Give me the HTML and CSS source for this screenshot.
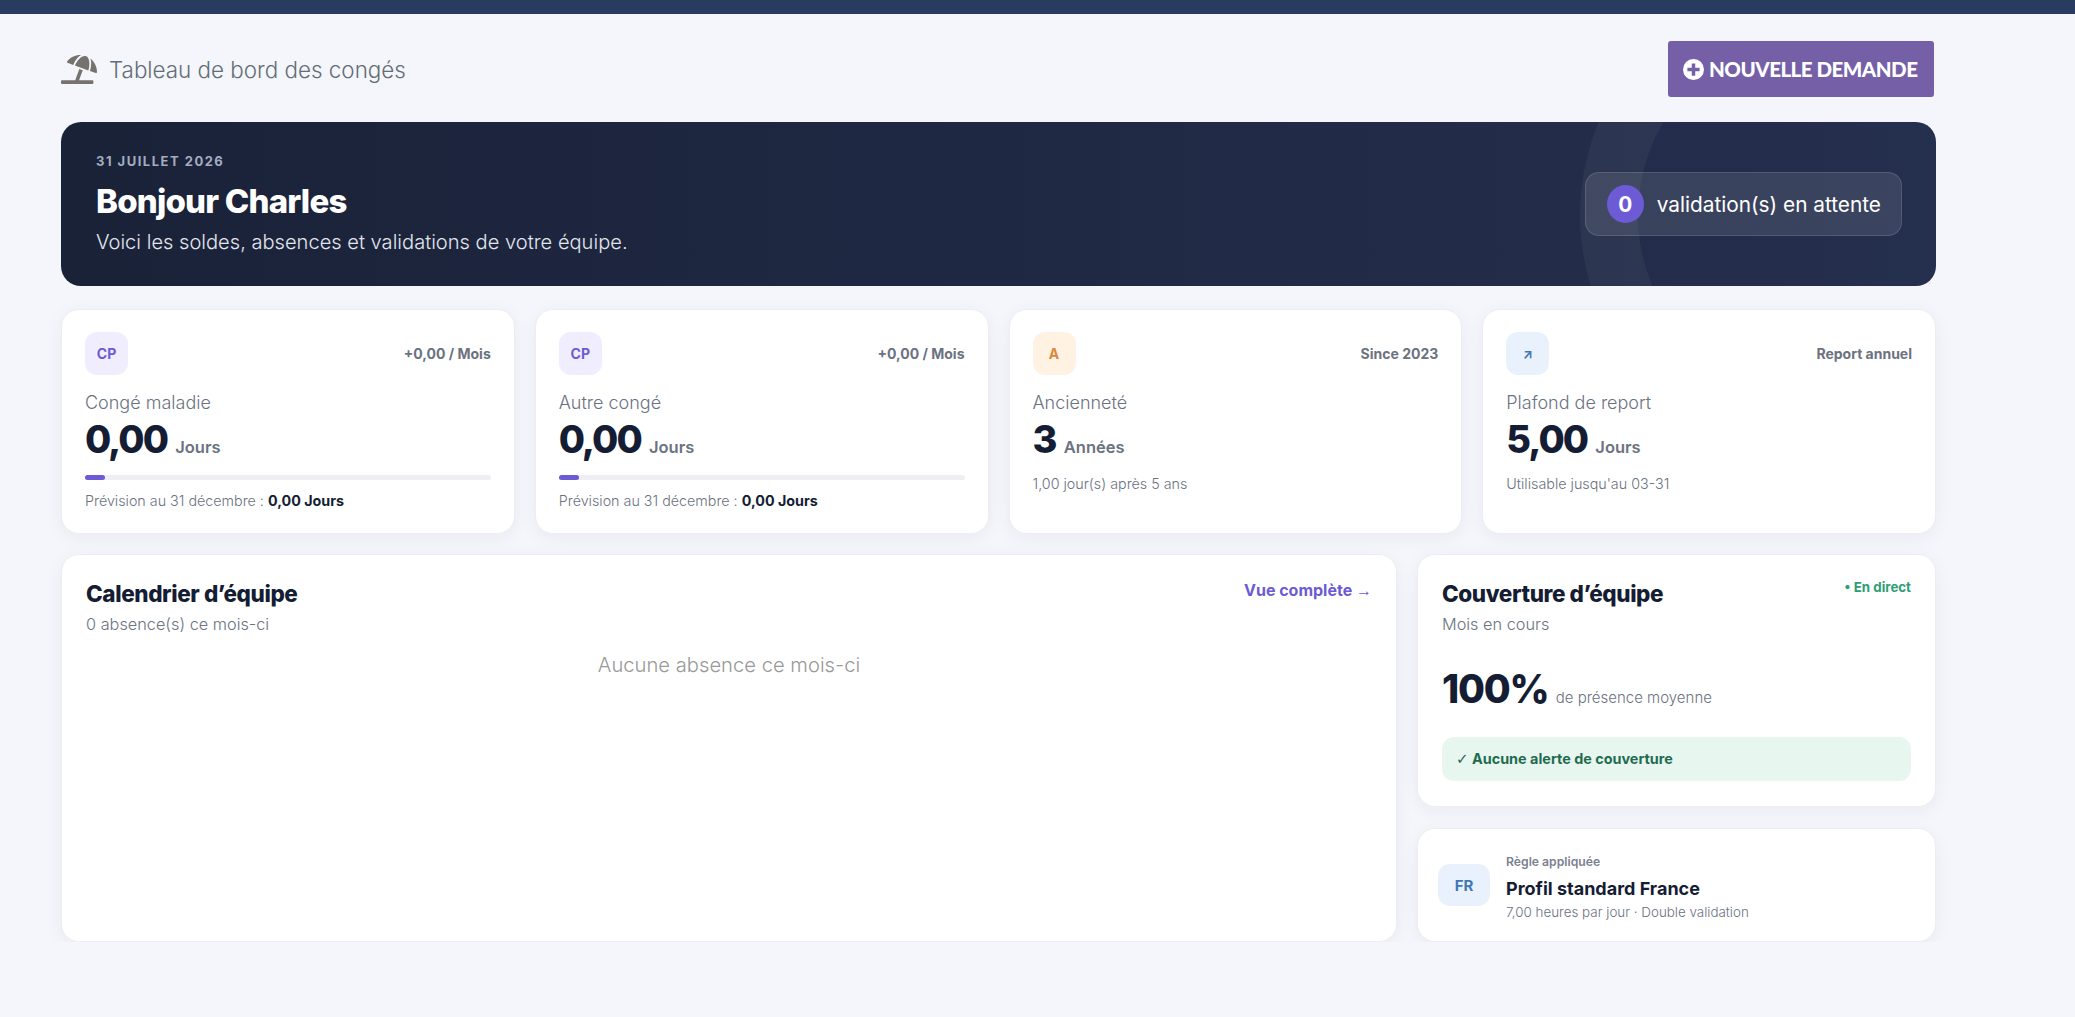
FILE: index.html
```html
<!DOCTYPE html>
<html lang="fr">
<head>
    <meta charset="UTF-8">
    <title>Tableau de bord des congés</title>
    <link rel="stylesheet" href="styles.css">
</head>
<body>
    <div class="topbar"></div>
    <main class="page">
        <div class="page-head">
            <div class="page-title">
                <svg class="beach-icon" viewBox="0 0 640 512"><path d="M115.38 136.9l102.11 37.18c35.19-81.54 86.21-144.29 139-173.7-95.88-4.89-188.78 36.96-248.53 111.8-6.69 8.4-2.66 21.05 7.42 24.72zm132.25 48.16l238.48 86.83c35.76-121.38 18.7-231.66-42.63-253.98-7.4-2.7-15.13-4-23.09-4-58.02.01-128.27 69.17-172.76 171.15zM521.48 60.5c6.22 16.3 10.83 34.6 13.2 55.19 5.74 49.89-1.42 108.23-18.95 166.98l102.62 37.36c10.09 3.67 21.31-3.43 21.57-14.17 2.32-95.69-41.91-187.44-118.44-245.36zM560 447.98H321.06L386 269.5l-60.14-21.9-72.9 200.37H16c-8.84 0-16 7.16-16 16.01v32.01C0 504.83 7.16 512 16 512h544c8.84 0 16-7.17 16-16.01v-32.01c0-8.84-7.16-16-16-16z"/></svg>
                <span>Tableau de bord des congés</span>
            </div>
            <button class="new-btn">
                <svg class="plus-icon" viewBox="0 0 24 24"><path fill-rule="evenodd" d="M12 0a12 12 0 1 0 0 24a12 12 0 1 0 0-24zM10 5h4v5h5v4h-5v5h-4v-5H5v-4h5z"/></svg>
                NOUVELLE DEMANDE
            </button>
        </div>

        <section class="hero">
            <div class="hero-ring"></div>
            <div class="hero-text">
                <div class="hero-date">31 JUILLET 2026</div>
                <h1>Bonjour Charles</h1>
                <p>Voici les soldes, absences et validations de votre équipe.</p>
            </div>
            <div class="pending">
                <span class="pending-count">0</span>
                <span>validation(s) en attente</span>
            </div>
        </section>

        <section class="stats">
            <div class="card stat">
                <div class="stat-head">
                    <span class="chip chip-purple">CP</span>
                    <span class="stat-tag">+0,00 / Mois</span>
                </div>
                <div class="stat-label">Congé maladie</div>
                <div class="stat-value">0,00 <span>Jours</span></div>
                <div class="bar"><div class="bar-fill" style="width: 5%"></div></div>
                <div class="stat-note">Prévision au 31 décembre : <b>0,00 Jours</b></div>
            </div>
            <div class="card stat">
                <div class="stat-head">
                    <span class="chip chip-purple">CP</span>
                    <span class="stat-tag">+0,00 / Mois</span>
                </div>
                <div class="stat-label">Autre congé</div>
                <div class="stat-value">0,00 <span>Jours</span></div>
                <div class="bar"><div class="bar-fill" style="width: 5%"></div></div>
                <div class="stat-note">Prévision au 31 décembre : <b>0,00 Jours</b></div>
            </div>
            <div class="card stat">
                <div class="stat-head">
                    <span class="chip chip-orange">A</span>
                    <span class="stat-tag">Since 2023</span>
                </div>
                <div class="stat-label">Ancienneté</div>
                <div class="stat-value">3 <span>Années</span></div>
                <div class="stat-note stat-note-plain">1,00 jour(s) après 5 ans</div>
            </div>
            <div class="card stat">
                <div class="stat-head">
                    <span class="chip chip-blue chip-arrow">↗</span>
                    <span class="stat-tag">Report annuel</span>
                </div>
                <div class="stat-label">Plafond de report</div>
                <div class="stat-value">5,00 <span>Jours</span></div>
                <div class="stat-note stat-note-plain">Utilisable jusqu'au 03-31</div>
            </div>
        </section>

        <section class="lower">
            <div class="card calendar">
                <div class="card-head">
                    <div>
                        <h2>Calendrier d’équipe</h2>
                        <div class="card-sub">0 absence(s) ce mois-ci</div>
                    </div>
                    <a class="card-link">Vue complète <span class="link-arrow">→</span></a>
                </div>
                <div class="empty">Aucune absence ce mois-ci</div>
            </div>
            <div class="side">
                <div class="card coverage">
                    <div class="card-head">
                        <div>
                            <h2>Couverture d’équipe</h2>
                            <div class="card-sub">Mois en cours</div>
                        </div>
                        <span class="live">• En direct</span>
                    </div>
                    <div class="coverage-value"><strong>100%</strong> <span>de présence moyenne</span></div>
                    <div class="coverage-ok"><span class="check">✓</span> Aucune alerte de couverture</div>
                </div>
                <div class="card rule">
                    <span class="chip chip-blue chip-wide">FR</span>
                    <div class="rule-text">
                        <div class="rule-label">Règle appliquée</div>
                        <div class="rule-name">Profil standard France</div>
                        <div class="rule-note">7,00 heures par jour · Double validation</div>
                    </div>
                </div>
            </div>
        </section>
    </main>
</body>
</html>
```

FILE: styles.css
```css
* {
    box-sizing: border-box;
}

body {
    font-family: Inter, 'Noto Sans', sans-serif;
    margin: 0;
    background-color: #f4f6fb;
    color: #141d33;
}

.topbar {
    height: 14px;
    background-color: #283c5f;
}

.page {
    padding: 27px 139px 0 61px;
}

.page-head {
    display: flex;
    justify-content: space-between;
    align-items: center;
    height: 56px;
    margin-bottom: 25px;
}

.page-title {
    display: flex;
    align-items: center;
    gap: 12px;
    font-size: 22.4px;
    font-weight: 300;
    color: #636d75;
}

.beach-icon {
    width: 36px;
    height: 29px;
    fill: #76726e;
}

.new-btn {
    display: flex;
    align-items: center;
    gap: 5px;
    height: 56px;
    width: 266px;
    margin-right: 2px;
    padding: 0 15px;
    border: none;
    border-radius: 3px;
    background-color: #7560a8;
    color: white;
    font-family: Lato, sans-serif;
    font-size: 20.5px;
    font-weight: 900;
    letter-spacing: -0.5px;
    white-space: nowrap;
}

.plus-icon {
    width: 21px;
    height: 21px;
    fill: white;
    flex: none;
}

.hero {
    position: relative;
    overflow: hidden;
    display: flex;
    justify-content: space-between;
    align-items: center;
    height: 164px;
    padding: 0 35px;
    border-radius: 20px;
    background: linear-gradient(90deg, #1a2238, #252f4e);
    color: white;
    margin-bottom: 23px;
}

.hero-ring {
    position: absolute;
    top: -147px;
    right: -124px;
    width: 480px;
    height: 480px;
    border: 58px solid rgba(255,255,255,0.045);
    border-radius: 50%;
}

.hero-text {
    position: relative;
}

.hero-date {
    margin-top: -2px;
    font-size: 13px;
    font-weight: 700;
    letter-spacing: 1.5px;
    color: #a3adc2;
}

.hero h1 {
    margin: 10px 0 7px;
    font-size: 33px;
    font-weight: 800;
    letter-spacing: -0.8px;
    line-height: 44px;
}

.hero p {
    margin: 0;
    font-size: 20.1px;
    font-weight: 300;
    color: #e2e6ee;
}

.pending {
    position: relative;
    display: flex;
    align-items: center;
    gap: 13px;
    height: 64px;
    margin-right: -1px;
    padding: 0 20px 0 21px;
    border: 1px solid rgba(255,255,255,0.13);
    border-radius: 14px;
    background-color: rgba(255,255,255,0.1);
    font-size: 20.8px;
    font-weight: 400;
}

.pending-count {
    display: flex;
    align-items: center;
    justify-content: center;
    width: 37px;
    height: 38px;
    border-radius: 50%;
    background-color: #6c5bd4;
    font-weight: 700;
}

.stats {
    display: grid;
    grid-template-columns: repeat(4, 1fr);
    gap: 20px;
    margin-bottom: 20px;
}

.card {
    background-color: white;
    border: 1px solid #eceef3;
    border-radius: 18px;
    box-shadow: 0 4px 18px rgba(30,40,70,0.05);
}

.stat {
    height: 225px;
    padding: 22px 23px;
}

.stat-head {
    display: flex;
    justify-content: space-between;
    align-items: center;
    margin-bottom: 16px;
}

.chip {
    display: flex;
    align-items: center;
    justify-content: center;
    width: 43px;
    height: 43px;
    border-radius: 12px;
    font-size: 14px;
    font-weight: 700;
}

.chip-purple {
    background-color: #f0edff;
    color: #6c5bd4;
}

.chip-orange {
    background-color: #fff2e3;
    color: #d98a3d;
}

.chip-blue {
    background-color: #e9f2fc;
    color: #3f78b5;
}

.chip-arrow {
    font-size: 13px;
}

.chip-wide {
    flex: none;
    width: 52px;
    height: 42px;
    font-size: 15px;
}

.stat-tag {
    font-size: 14px;
    font-weight: 700;
    color: #6b7280;
}

.stat-label {
    font-size: 18px;
    font-weight: 300;
    color: #6b7280;
    line-height: 24px;
}

.stat-value {
    font-size: 38px;
    font-weight: 800;
    letter-spacing: -2px;
    line-height: 48px;
}

.stat-value span {
    font-size: 16.5px;
    font-weight: 600;
    letter-spacing: 0;
    color: #6b7280;
    margin-left: 2px;
}

.bar {
    height: 5px;
    margin-top: 4px;
    border-radius: 3px;
    background-color: #eeeef4;
}

.bar-fill {
    height: 100%;
    border-radius: 3px;
    background-color: #6c5bd4;
}

.stat-note {
    margin-top: 12px;
    font-size: 14.3px;
    font-weight: 300;
    color: #6b7280;
}

.stat-note b {
    font-weight: 700;
    color: #141d33;
}

.stat-note-plain {
    margin-top: 4px;
}

.lower {
    display: grid;
    grid-template-columns: 1fr 519px;
    gap: 20px;
    height: 388px;
}

.card-head {
    display: flex;
    justify-content: space-between;
    align-items: flex-start;
}

.card h2 {
    margin: 0;
    font-size: 22.5px;
    font-weight: 800;
    letter-spacing: -0.4px;
    line-height: 30px;
}

.card-sub {
    margin-top: 5px;
    font-size: 16.3px;
    font-weight: 300;
    color: #6b7280;
}

.calendar {
    padding: 24px;
}

.card-link {
    margin-top: 1px;
    font-size: 16px;
    font-weight: 700;
    color: #6c5bd4;
}

.link-arrow {
    font-family: 'Liberation Sans', sans-serif;
    font-weight: 400;
}

.empty {
    margin-top: 18px;
    text-align: center;
    font-size: 20.2px;
    font-weight: 300;
    color: #999;
}

.side {
    display: flex;
    flex-direction: column;
    gap: 21px;
}

.coverage {
    height: 253px;
    padding: 24px;
}

.live {
    font-size: 13.3px;
    font-weight: 700;
    color: #2f9e75;
}

.coverage-value {
    margin-top: 31px;
    font-size: 15px;
    color: #6b7280;
}

.coverage-value strong {
    font-size: 39px;
    font-weight: 800;
    letter-spacing: -1.2px;
    color: #141d33;
    margin-right: 3px;
}

.coverage-value span {
    font-weight: 300;
}

.coverage-ok {
    margin-top: 25px;
    height: 44px;
    line-height: 44px;
    padding: 0 14px;
    border-radius: 12px;
    background-color: #e8f6f0;
    color: #1f6b4f;
    font-size: 14.4px;
    font-weight: 700;
}

.check {
    font-family: 'DejaVu Sans', sans-serif;
    font-size: 15px;
    font-weight: 400;
}

.rule {
    flex: 1;
    display: flex;
    align-items: center;
    gap: 16px;
    padding: 0 20px;
}

.rule-text {
    padding-top: 4px;
}

.rule-label {
    font-size: 12.2px;
    font-weight: 600;
    color: #7b8090;
}

.rule-name {
    margin: 9px 0 5px;
    font-size: 18px;
    font-weight: 700;
}

.rule-note {
    font-size: 13.4px;
    font-weight: 300;
    color: #6b7280;
}
```
